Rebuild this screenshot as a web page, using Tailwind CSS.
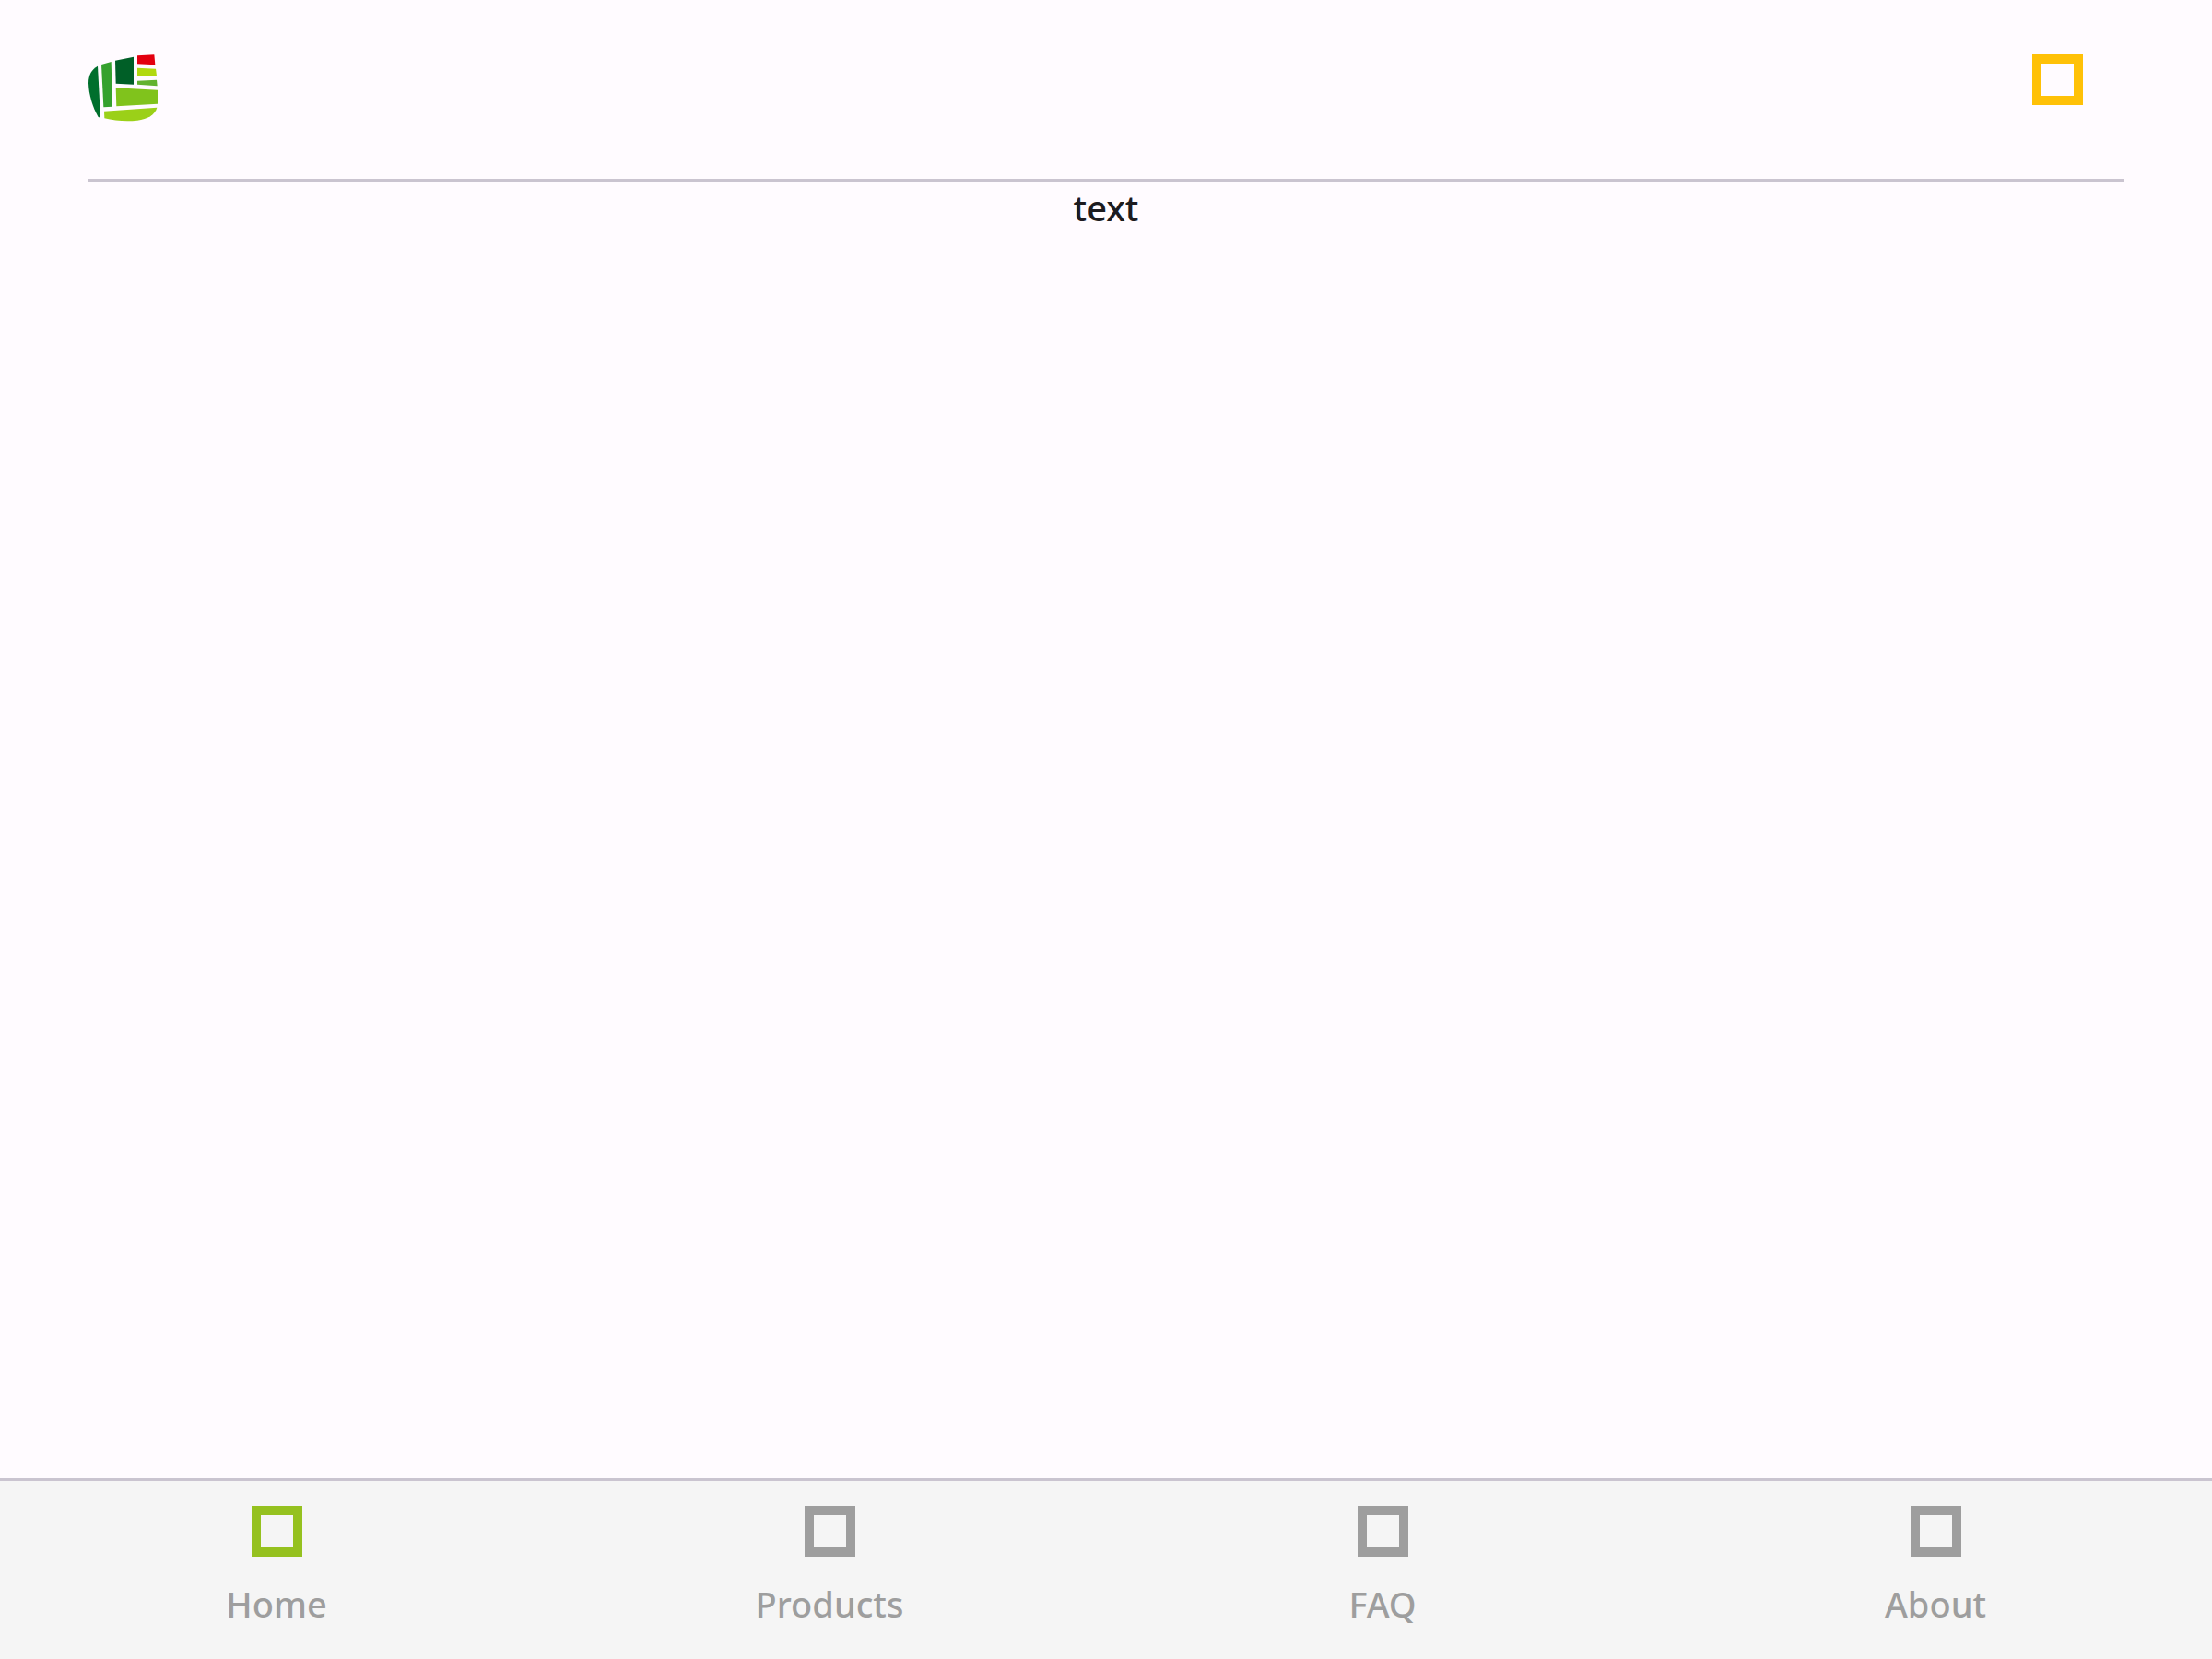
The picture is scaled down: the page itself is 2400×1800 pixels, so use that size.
<!DOCTYPE html>
<html lang="en">
<head>
<meta charset="utf-8">
<meta name="viewport" content="width=device-width, initial-scale=1">
<title>Home</title>
<script src="https://cdn.jsdelivr.net/npm/@tailwindcss/browser@4"></script>
</head>
<body class="flex min-h-screen flex-col bg-[#fffbff] font-['Noto_Sans',sans-serif] text-[38px] leading-[52px] font-medium text-[#1c1b1f]">
  <header class="mx-24 flex items-start justify-between border-b-3 border-[#cac4d0] pt-[59px] pb-[62px]">
    <svg class="h-[73px] w-[75px]" viewBox="48 43 225 219" role="img" aria-label="Logo">
      <path fill="#006f2d" d="M78 81C58 93 48 109 48 137C49 172 61 216 80 247L87 249Z"/>
      <path fill="#35a12e" d="M90 76L122 67L126 213L97 215Z"/>
      <path fill="#005f27" d="M135 63L195 51V141L137 138Z"/>
      <path fill="#e3000f" d="M207 47L262 44L265 77L207 74Z"/>
      <path fill="#b1d90f" d="M207 87L267 90L270 113L207 115Z"/>
      <path fill="#62b22f" d="M207 129L270 126L272 146L207 141Z"/>
      <path fill="#80c31c" d="M137 152L273 159V204L139 212Z"/>
      <path fill="#9bd018" d="M99 228L271 216C265 239 240 254 207 258C171 262 134 259 100 251Z"/>
    </svg>
    <button type="button" aria-label="Menu" class="flex w-36 justify-center">
      <span class="size-[55px] border-10 border-[#ffc107]"></span>
    </button>
  </header>
  <main class="flex-1 pt-0.5 text-center">text</main>
  <nav class="grid grid-cols-4 border-t-3 border-[#cac4d0] bg-[#f5f5f5] pt-[27px] pb-[34px] text-[#9e9e9e]">
    <a href="#home" aria-current="page" class="flex flex-col items-center gap-[25px]"><span class="size-[55px] border-10 border-[#95c11f]"></span>Home</a>
    <a href="#products" class="flex flex-col items-center gap-[25px]"><span class="size-[55px] border-10 border-[#9e9e9e]"></span>Products</a>
    <a href="#faq" class="flex flex-col items-center gap-[25px]"><span class="size-[55px] border-10 border-[#9e9e9e]"></span>FAQ</a>
    <a href="#about" class="flex flex-col items-center gap-[25px]"><span class="size-[55px] border-10 border-[#9e9e9e]"></span>About</a>
  </nav>
</body>
</html>
